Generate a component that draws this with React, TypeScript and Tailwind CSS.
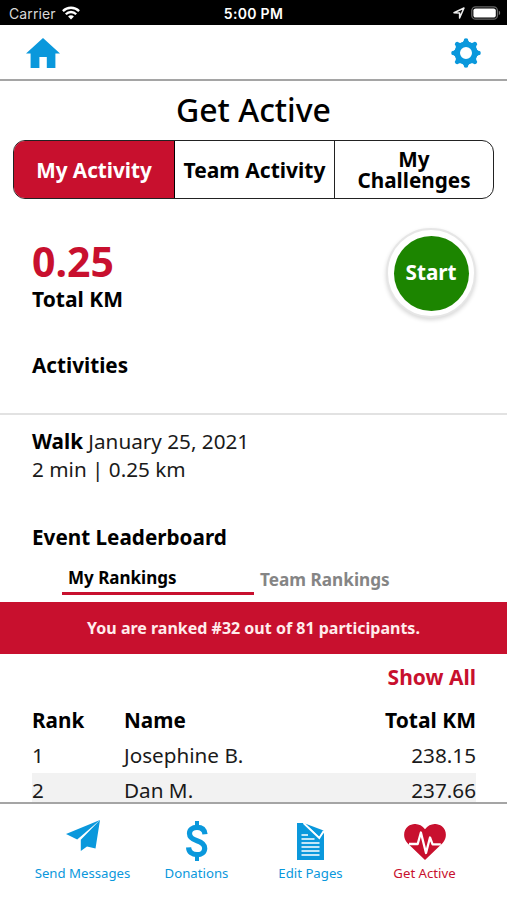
import type { ReactNode } from "react";
import clsx from "clsx";

interface TabItemProps {
  label: string;
  active?: boolean;
  children: ReactNode;
}

const rankings = [
  { rank: 1, name: "Josephine B.", total: "238.15" },
  { rank: 2, name: "Dan M.", total: "237.66" },
];

function StatusBar() {
  return (
    <div className="grid h-[25px] shrink-0 grid-cols-3 items-center bg-black pt-[3px] font-['Inter','Liberation_Sans',sans-serif] text-white">
      <div className="flex items-center gap-[6px] pl-[9px]">
        <span className="text-[14px] leading-none tracking-[0.1px] text-[#d8d8d8]">Carrier</span>
        <svg className="-mt-[2px] h-[14px] w-[18px]" viewBox="0 0 18 14" fill="none" stroke="#fff" strokeWidth="2.3">
          <path d="M.9 5.1a11.5 11.5 0 0 1 16.2 0" />
          <path d="M3.8 8.2a7.3 7.3 0 0 1 10.4 0" />
          <path d="M6.1 10.4a4 4 0 0 1 5.8 0L9 13.4z" fill="#fff" stroke="none" />
        </svg>
      </div>
      <div className="text-center text-[14px] font-semibold leading-none tracking-[0.3px]">5:00 PM</div>
      <div className="flex items-center justify-end gap-[6px] pr-[6px]">
        <svg className="-mt-[2px] h-[12px] w-[12px]" viewBox="0 0 12 12" fill="none" stroke="#eee" strokeWidth="1.5" strokeLinejoin="round">
          <path d="M1 5.8 11 1 6.600 11V6z" />
        </svg>
        <svg className="-mt-[2px] h-[14px] w-[30px]" viewBox="0 0 30 14">
          <rect x=".8" y=".8" width="25.6" height="12.4" rx="3.8" fill="none" stroke="#666" strokeWidth="1.3" />
          <rect x="2.4" y="2.4" width="22.4" height="9.2" rx="2.2" fill="#fff" />
          <path d="M27.8 4.8c1.8.6 1.8 3.8 0 4.4z" fill="#777" />
        </svg>
      </div>
    </div>
  );
}

function HomeIcon() {
  return (
    <svg className="h-[30px] w-[34px]" viewBox="0 0 34 30" fill="#0a98dc">
      <path d="M17 0 34 15.5h-4.600V30h-8.600V19h-7.400v11H4.600V15.500H0z" />
    </svg>
  );
}

function GearIcon() {
  const angles = [0, 45, 90, 135];

  return (
    <svg className="h-[30px] w-[30px]" viewBox="-15 -15 30 30" stroke="#0a98dc">
      {angles.map((angle) => (
        <g key={angle} transform={`rotate(${angle})`} strokeLinecap="round">
          <path d="M0-12.500V-9M0 9v3.500" strokeWidth="4.600" />
          <path d="M-1.500-10.500h3M-1.500 10.500h3" strokeWidth="3.500" />
        </g>
      ))}
      <circle r="8.800" fill="none" strokeWidth="5.600" />
    </svg>
  );
}

function TabItem({ label, active = false, children }: TabItemProps) {
  return (
    <button className={clsx("flex w-[114px] flex-col items-center", active ? "text-[#c8102e]" : "text-[#0a98dc]")}>
      <span className="flex h-[45px] items-center justify-center">{children}</span>
      <span className="whitespace-nowrap text-[13.2px] leading-[18px]">{label}</span>
    </button>
  );
}

function BottomBar() {
  return (
    <nav className="flex h-[98px] shrink-0 justify-center border-t-2 border-[#a5a5a5] bg-white pt-[15px]">
      <TabItem label="Send Messages">
        <svg className="mb-[13px] h-[31px] w-[34px]" viewBox="0 0 34 31" fill="currentColor">
          <path d="M34 0 0 14l11.200 5.600z" />
          <path d="M34 0 14.800 19.800V31l6.200-4.500 8.500 2z" />
        </svg>
      </TabItem>
      <TabItem label="Donations">
        <svg className="mb-px h-[40px] w-[22px]" viewBox="0 0 22 40" fill="none" stroke="currentColor">
          <path d="M11 0v6M11 34v6" strokeWidth="4" />
          <path d="M19 13.200C18.600 8.600 15.500 6.300 11 6.300S3.500 8.600 3.500 12.400C3.500 16.700 6.500 18.200 11 19.700s7.700 3.300 7.700 7.500-3.200 6.500-7.700 6.500c-4.700 0-8.200-2.500-8.400-7.300" strokeWidth="5.200" />
        </svg>
      </TabItem>
      <TabItem label="Edit Pages">
        <svg className="h-[37px] w-[27px]" viewBox="0 0 27 37">
          <path d="M0 0h7l15 14.800 5-5V37H0z" fill="currentColor" />
          <path d="M8 .5 26.500 7.500 22.300 14z" fill="currentColor" />
          <path d="M6.500 0 22.300 15 26.700 8" fill="none" stroke="#fff" strokeWidth="1.800" />
          <path d="M4.500 12h6.500M4.500 16h13M4.500 20h18M4.500 24h18M4.500 28h18M4.500 32h18" stroke="#fff" strokeWidth="1.500" />
        </svg>
      </TabItem>
      <TabItem label="Get Active" active>
        <svg className="mt-px h-[36px] w-[42px]" viewBox="0 0 42 36">
          <path d="M21 36 3.300 19C-1.300 14-.8 6 4.100 2.300 9-1.400 16.500-.8 21 5.200 25.500-.8 33-1.400 37.900 2.300 42.800 6 43.300 14 38.700 19z" fill="currentColor" />
          <path d="M5 20h8.700l3.200-11.500 5.100 20.500 4-15.500 2.600 6.800h8.200" fill="none" stroke="#fff" strokeWidth="2.300" strokeLinejoin="round" />
        </svg>
      </TabItem>
    </nav>
  );
}

export default function App() {
  return (
    <div className="flex h-[900px] w-[507px] flex-col overflow-hidden bg-white font-['Noto_Sans',sans-serif] text-[20.7px] leading-[28px] text-black">
      <StatusBar />
      <header className="flex h-[56px] shrink-0 items-center justify-between border-b-2 border-[#a5a5a5] px-[26px] pt-px">
        <HomeIcon />
        <GearIcon />
      </header>

      <main className="min-h-0 flex-1 overflow-hidden">
        <h1 className="h-[59px] text-center text-[32px] font-medium leading-[58px]">Get Active</h1>

        <div className="mx-[13px] flex h-[59px] overflow-hidden rounded-[12px] border border-[#222] pt-px text-center font-bold leading-[21px]">
          <button className="-mt-px w-[161px] border-r border-black bg-[#c8102e] pt-[2px] text-white">My Activity</button>
          <button className="-mt-px w-[160px] whitespace-nowrap border-r border-[#222] pt-[2px] text-[21px]">Team Activity</button>
          <button className="flex-1">
            My
            <br />
            Challenges
          </button>
        </div>

        <section className="flex justify-between pl-[32px] pr-[31px] pt-[29px]">
          <div className="pt-[8px]">
            <div className="h-[50px] text-[41px] font-bold leading-[50px] text-[#c8102e]">0.25</div>
            <div className="text-[21px] font-bold leading-[26px]">Total KM</div>
          </div>
          <button className="flex size-[90px] items-center justify-center rounded-full border-2 border-[#e6e6e6] bg-white shadow-[0_2px_4px_rgba(0,0,0,0.16)]">
            <span className="flex size-[75px] items-center justify-center rounded-full bg-[#1c8500] pb-[2px] font-bold text-white">Start</span>
          </button>
        </section>

        <h2 className="mt-[33px] h-[64px] border-b-2 border-[#e2e2e2] pl-[32px] font-bold">Activities</h2>
        <div className="pl-[32px] pt-[12px] text-[#1a1a1a]">
          <div>
            <b className="text-black">Walk</b> January 25, 2021
          </div>
          <div>2 min | 0.25 km</div>
        </div>

        <h2 className="mt-[40px] pl-[32px] font-bold">Event Leaderboard</h2>
        <div className="ml-[62px] flex h-[51px] text-[17px] font-bold leading-[24px]">
          <button className="h-[44px] w-[192px] border-b-[3px] border-[#c8102e] pl-[6px] pt-[12px] text-left">My Rankings</button>
          <button className="h-[44px] pl-[6px] pt-[14px] text-[17.2px] text-[#858585]">Team Rankings</button>
        </div>
        <div className="h-[52px] bg-[#c8102e] text-center text-[16px] font-bold leading-[52px] text-[#ffecec]">
          You are ranked #32 out of 81 participants.
        </div>

        <div className="px-[31px] pt-[9px] text-right text-[21px] font-bold text-[#c8102e]">Show All</div>
        <table className="ml-[32px] mt-[12px] w-[444px] table-fixed leading-[35px]">
          <thead>
            <tr className="font-bold">
              <th className="w-[92px] text-left">Rank</th>
              <th className="text-left">Name</th>
              <th className="text-right text-[21px]">Total KM</th>
            </tr>
          </thead>
          <tbody className="text-[#1a1a1a]">
            {rankings.map((row) => (
              <tr key={row.rank} className="even:bg-[#f2f2f2]">
                <td>{row.rank}</td>
                <td>{row.name}</td>
                <td className="text-right">{row.total}</td>
              </tr>
            ))}
          </tbody>
        </table>
      </main>

      <BottomBar />
    </div>
  );
}
